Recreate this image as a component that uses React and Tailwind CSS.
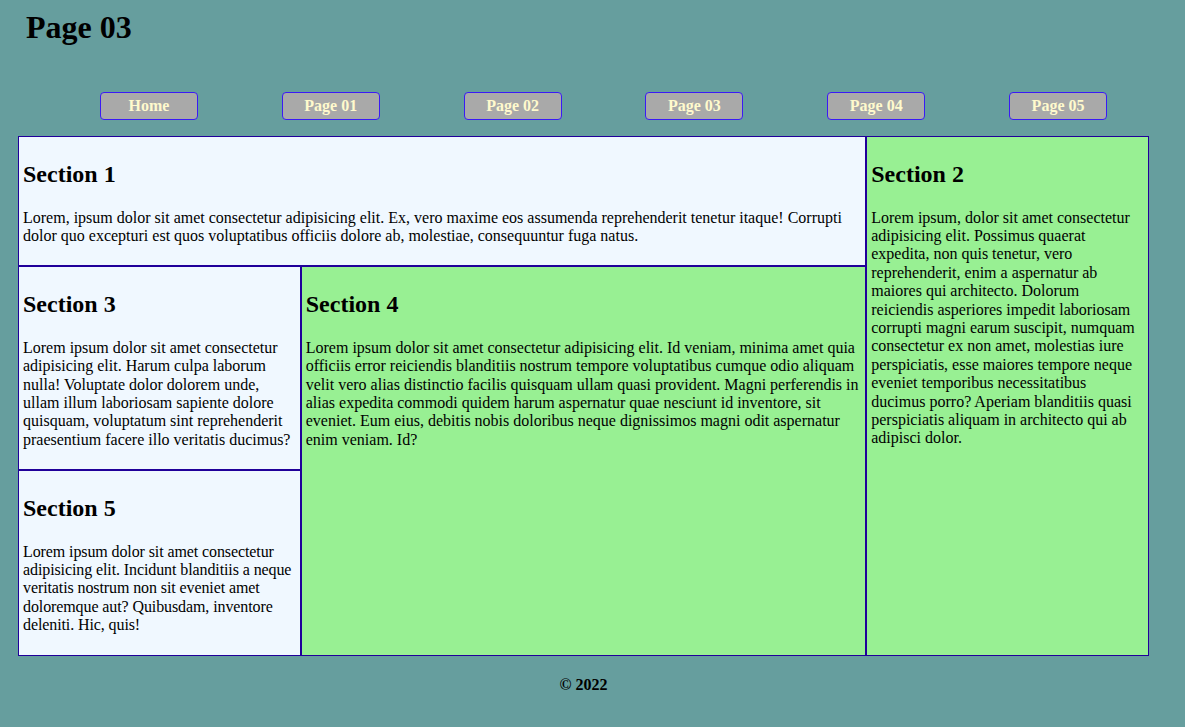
export default function App() {
  const links = ["Home", "Page 01", "Page 02", "Page 03", "Page 04", "Page 05"];

  const cell = "border border-[#20009a] px-1 py-1";
  const h2 = "text-[24px] leading-[27.6px] font-bold mt-[19.92px] mb-[19.92px]";
  const p = "text-[16px] leading-[18.4px] mb-[16px]";

  return (
    <div className="min-h-[727px] bg-[#669e9e] font-['Liberation_Serif',serif] text-black">
      <header className="pl-[26px] pt-[9px]">
        <h1 className="text-[32px] leading-[36.8px] font-bold">Page 03</h1>
      </header>

      <nav className="mx-[18px] w-[1131px] pl-[40px] pt-[46px] pb-[16px]">
        <ul className="flex">
          {links.map((l) => (
            <li key={l} className="flex flex-1 justify-center">
              <a
                href="#"
                className="block w-[98px] rounded-[4px] border border-[#3a1af5] bg-[#a9a9a9] py-1 text-center text-[16px] leading-[18.4px] font-bold text-[#fffacd]"
              >
                {l}
              </a>
            </li>
          ))}
        </ul>
      </nav>

      <main className="ml-[18px] grid w-[1131px] grid-cols-[1fr_2fr_1fr] grid-rows-[auto_auto_auto]">
        <section className={`${cell} col-span-2 bg-[#f0f8ff]`}>
          <h2 className={h2}>Section 1</h2>
          <p className={p}>
            Lorem, ipsum dolor sit amet consectetur adipisicing elit. Ex, vero maxime eos assumenda
            reprehenderit tenetur itaque! Corrupti dolor quo excepturi est quos voluptatibus officiis
            dolore ab, molestiae, consequuntur fuga natus.
          </p>
        </section>

        <section className={`${cell} col-start-3 row-span-3 row-start-1 bg-[#98f093]`}>
          <h2 className={h2}>Section 2</h2>
          <p className={p}>
            Lorem ipsum, dolor sit amet consectetur adipisicing elit. Possimus quaerat expedita, non
            quis tenetur, vero reprehenderit, enim a aspernatur ab maiores qui architecto. Dolorum
            reiciendis asperiores impedit laboriosam corrupti magni earum suscipit, numquam
            consectetur ex non amet, molestias iure perspiciatis, esse maiores tempore neque eveniet
            temporibus necessitatibus ducimus porro? Aperiam blanditiis quasi perspiciatis aliquam in
            architecto qui ab adipisci dolor.
          </p>
        </section>

        <section className={`${cell} col-start-1 row-start-2 bg-[#f0f8ff]`}>
          <h2 className={h2}>Section 3</h2>
          <p className={p}>
            Lorem ipsum dolor sit amet consectetur adipisicing elit. Harum culpa laborum nulla!
            Voluptate dolor dolorem unde, ullam illum laboriosam sapiente dolore quisquam, voluptatum
            sint reprehenderit praesentium facere illo veritatis ducimus?
          </p>
        </section>

        <section className={`${cell} col-start-2 row-span-2 row-start-2 bg-[#98f093]`}>
          <h2 className={h2}>Section 4</h2>
          <p className={p}>
            Lorem ipsum dolor sit amet consectetur adipisicing elit. Id veniam, minima amet quia
            officiis error reiciendis blanditiis nostrum tempore voluptatibus cumque odio aliquam
            velit vero alias distinctio facilis quisquam ullam quasi provident. Magni perferendis in
            alias expedita commodi quidem harum aspernatur quae nesciunt id inventore, sit eveniet.
            Eum eius, debitis nobis doloribus neque dignissimos magni odit aspernatur enim veniam. Id?
          </p>
        </section>

        <section className={`${cell} col-start-1 row-start-3 bg-[#f0f8ff]`}>
          <h2 className={h2}>Section 5</h2>
          <p className={`${p} tracking-[-0.1px]`}>
            Lorem ipsum dolor sit amet consectetur adipisicing elit. Incidunt blanditiis a neque
            veritatis nostrum non sit eveniet amet doloremque aut? Quibusdam, inventore deleniti. Hic,
            quis!
          </p>
        </section>
      </main>

      <footer className="ml-[18px] w-[1131px] pt-[20px] text-center">
        <p className="text-[16px] leading-[18.4px] font-bold">© 2022</p>
      </footer>
    </div>
  );
}
